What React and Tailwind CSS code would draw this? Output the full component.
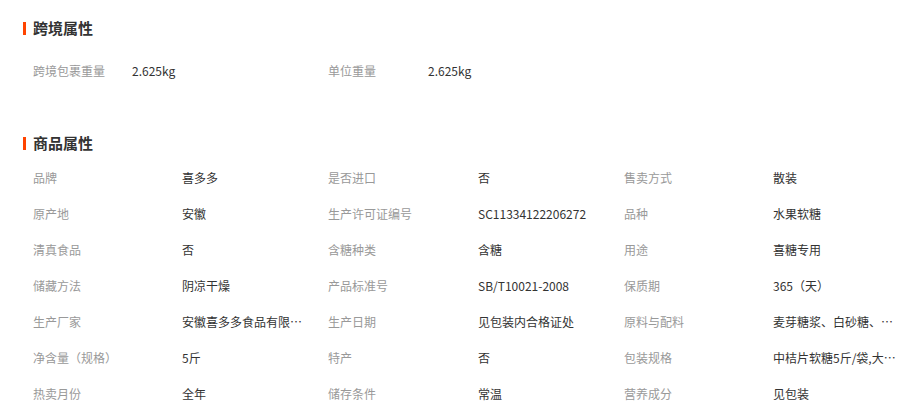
import React from "react";

const font = { fontFamily: '"Noto Sans CJK SC", "Noto Sans", sans-serif' };

const goods = [
  [["品牌", "喜多多"], ["是否进口", "否"], ["售卖方式", "散装"]],
  [["原产地", "安徽"], ["生产许可证编号", "SC11334122206272"], ["品种", "水果软糖"]],
  [["清真食品", "否"], ["含糖种类", "含糖"], ["用途", "喜糖专用"]],
  [["储藏方法", "阴凉干燥"], ["产品标准号", "SB/T10021-2008"], ["保质期", "365（天）"]],
  [["生产厂家", "安徽喜多多食品有限公司"], ["生产日期", "见包装内合格证处"], ["原料与配料", "麦芽糖浆、白砂糖、明胶、柠檬酸"]],
  [["净含量（规格）", "5斤"], ["特产", "否"], ["包装规格", "中桔片软糖5斤/袋,大约300颗"]],
  [["热卖月份", "全年"], ["储存条件", "常温"], ["营养成分", "见包装"]],
];

function Title({ children, className }) {
  return (
    <div className={"flex items-center h-[20px] " + className}>
      <div className="w-[3px] h-[13px] bg-[#ff4400] mr-[7px]" />
      <div className="text-[15px] leading-[20px] font-bold text-[#333333]">{children}</div>
    </div>
  );
}

const colW = ["w-[295px]", "w-[296px]", "w-[294px]"];
const labW = ["w-[149px]", "w-[150px]", "w-[149px]"];

export default function App() {
  return (
    <div className="w-[918px] h-[414px] bg-white overflow-hidden pl-[23px]" style={font}>
      <Title className="mt-[18px]">跨境属性</Title>
      <div className="flex items-center h-[36px] mt-[15px] pl-[10px] text-[12px]">
        <div className="flex w-[295px]">
          <div className="w-[99px] text-[#999999]">跨境包裹重量</div>
          <div className="text-[#333333]">2.625kg</div>
        </div>
        <div className="flex">
          <div className="w-[100px] text-[#999999]">单位重量</div>
          <div className="text-[#333333]">2.625kg</div>
        </div>
      </div>
      <Title className="mt-[44px]">商品属性</Title>
      <div className="mt-[7px] pl-[10px] text-[12px]">
        {goods.map((row, i) => (
          <div key={i} className="flex items-center h-[36px]">
            {row.map(([k, v], j) => (
              <div key={j} className={"flex items-center " + colW[j]}>
                <div className={"text-[#999999] shrink-0 " + labW[j]}>{k}</div>
                <div className="text-[#333333] w-[124px] truncate">{v}</div>
              </div>
            ))}
          </div>
        ))}
      </div>
    </div>
  );
}
